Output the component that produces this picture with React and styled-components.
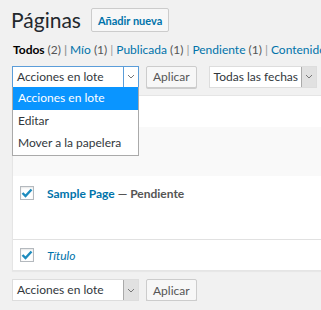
import React from 'react'
import styled, { createGlobalStyle } from 'styled-components'

const Global = createGlobalStyle`
  html, body { margin: 0; padding: 0; background: #f1f1f1; overflow: hidden; }
  body { font-family: "Segoe UI", Lato, "Liberation Sans", sans-serif; font-size: 12px; color: #444; }
`

const Wrap = styled.div`
  width: 420px;
  padding: 8px 0 0 12px;
  display: flex;
  flex-direction: column;
`

const Header = styled.div`
  display: flex;
  align-items: center;
  gap: 10px;
  height: 24px;
`

const Title = styled.h1`
  margin: 0 0 0 -1px;
  font-size: 21px;
  font-weight: 400;
  color: #23282d;
  line-height: 24px;
`

const AddNew = styled.a`
  display: inline-flex;
  align-items: center;
  height: 22px;
  padding: 0 6px;
  border: 1px solid #ccc;
  border-radius: 2px;
  background: #f7f7f7;
  color: #0073aa;
  font-size: 11px;
  font-weight: 700;
`

const Views = styled.ul`
  list-style: none;
  margin: 8px 0 0;
  padding: 0 0 0 1px;
  display: flex;
  white-space: nowrap;
  line-height: 20px;
  color: #666;
`

const View = styled.li`
  color: ${p => (p.current ? '#000' : '#0073aa')};
  font-weight: ${p => (p.current ? 700 : 400)};
  & .count { color: #555; font-weight: 400; }
  & .sep { color: #999; margin: 0 3px; }
`

const Nav = styled.div`
  display: flex;
  align-items: center;
  gap: 7px;
  margin-top: 5px;
  height: 23px;
  position: relative;
`

const Select = styled.div`
  display: flex;
  width: ${p => p.w}px;
  height: 22px;
  box-sizing: border-box;
  border: 1px solid ${p => (p.focus ? '#5b9dd9' : '#ddd')};
  background: #fff;
  margin-left: ${p => p.ml || 0}px;
`

const SelectText = styled.span`
  flex: 1;
  padding-left: 4px;
  line-height: 20px;
  color: #32373c;
  white-space: nowrap;
  overflow: hidden;
`

const Arrow = styled.span`
  width: 14px;
  display: flex;
  align-items: center;
  justify-content: center;
  border-left: 1px solid ${p => (p.focus ? '#5b9dd9' : '#aaa')};
  background: ${p => (p.focus ? '#fff' : '#e1e1e1')};
`

const Button = styled.span`
  display: inline-flex;
  align-items: center;
  height: 22px;
  box-sizing: border-box;
  padding: 0 6px;
  border: 1px solid #ccc;
  border-radius: 2px;
  background: #f7f7f7;
  color: #555;
  box-shadow: 0 1px 0 #ccc;
`

const Menu = styled.ul`
  position: absolute;
  left: 0;
  top: 22px;
  width: 127px;
  box-sizing: border-box;
  margin: 0;
  padding: 0;
  list-style: none;
  background: #fff;
  border: 1px solid #aaa;
  border-top: 0;
  z-index: 2;
`

const MenuItem = styled.li`
  height: 22.5px;
  line-height: 22px;
  padding-left: 5px;
  white-space: nowrap;
  color: ${p => (p.active ? '#fff' : '#32373c')};
  background: ${p => (p.active ? '#0a95ff' : 'transparent')};
`

const Table = styled.div`
  margin-top: 7px;
  border: 1px solid #e5e5e5;
  border-right: 0;
  background: #fff;
  box-shadow: 0 1px 1px rgba(0, 0, 0, 0.04);
  display: flex;
  flex-direction: column;
`

const Row = styled.div`
  display: flex;
  align-items: ${p => (p.foot ? 'center' : 'flex-start')};
  height: ${p => p.h}px;
  background: ${p => (p.alt ? '#f9f9f9' : '#fff')};
  border-top: ${p => (p.foot ? '1px solid #e1e1e1' : '0')};
  box-sizing: border-box;
  padding: ${p => (p.foot ? '0' : '10px')} 0 0 7px;
  gap: 13px;
`

const Check = styled.span`
  width: 14px;
  height: 14px;
  box-sizing: border-box;
  border: 1px solid #b4b9be;
  background: #fff;
  box-shadow: inset 0 1px 2px rgba(0, 0, 0, 0.1);
  display: flex;
  align-items: center;
  justify-content: center;
`

const RowTitle = styled.span`
  font-size: 12px;
  line-height: 16px;
  font-weight: 700;
  color: #555;
  & a { color: #0073aa; }
`

const ColTitle = styled.span`
  font-style: italic;
  font-size: 12px;
  color: #0073aa;
`

const Bottom = styled.div`
  display: flex;
  align-items: center;
  gap: 7px;
  margin-top: 8px;
`

const Chevron = () => (
  <svg width="8" height="5" viewBox="0 0 8 5">
    <path d="M1 1l3 3 3-3" fill="none" stroke="#777" strokeWidth="1" />
  </svg>
)

const Tick = () => (
  <svg width="12" height="10" viewBox="0 0 12 10">
    <path d="M1.5 5l3 3L10.5 1.5" fill="none" stroke="#1e8cbe" strokeWidth="2.4" />
  </svg>
)

export default function App() {
  return (
    <>
      <Global />
      <Wrap>
        <Header>
          <Title>Páginas</Title>
          <AddNew>Añadir nueva</AddNew>
        </Header>
        <Views>
          <View current>Todos <span className="count">(2)</span><span className="sep">|</span></View>
          <View>Mío <span className="count">(1)</span><span className="sep">|</span></View>
          <View>Publicada <span className="count">(1)</span><span className="sep">|</span></View>
          <View>Pendiente <span className="count">(1)</span><span className="sep">|</span></View>
          <View>Contenido <span style={{ color: '#d54e21' }}>(</span></View>
        </Views>
        <Nav>
          <Select w={127} focus>
            <SelectText>Acciones en lote</SelectText>
            <Arrow focus><Chevron /></Arrow>
          </Select>
          <Button>Aplicar</Button>
          <Select w={108} ml={5}>
            <SelectText>Todas las fechas</SelectText>
            <Arrow><Chevron /></Arrow>
          </Select>
          <Menu>
            <MenuItem active>Acciones en lote</MenuItem>
            <MenuItem>Editar</MenuItem>
            <MenuItem>Mover a la papelera</MenuItem>
          </Menu>
        </Nav>
        <Table>
          <Row h={31} />
          <Row h={49} alt />
          <Row h={63}>
            <Check><Tick /></Check>
            <RowTitle><a>Sample Page</a> — Pendiente</RowTitle>
          </Row>
          <Row h={31} foot>
            <Check><Tick /></Check>
            <ColTitle>Título</ColTitle>
          </Row>
        </Table>
        <Bottom>
          <Select w={127}>
            <SelectText>Acciones en lote</SelectText>
            <Arrow><Chevron /></Arrow>
          </Select>
          <Button>Aplicar</Button>
        </Bottom>
      </Wrap>
    </>
  )
}
